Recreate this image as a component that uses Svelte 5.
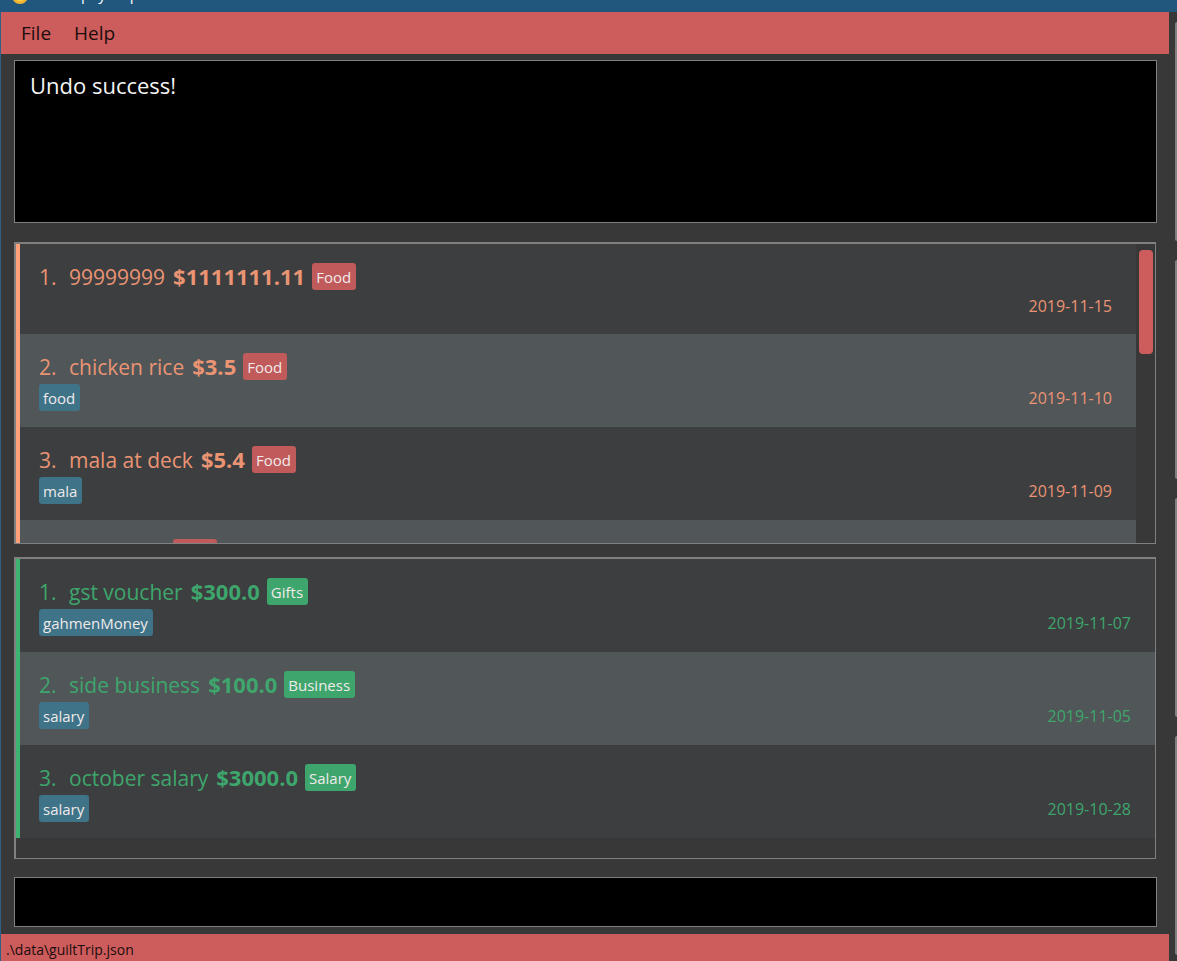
<script>
  const expenses = [
    { name: '99999999', amount: '$1111111.11', category: 'Food', tag: '', date: '2019-11-15' },
    { name: 'chicken rice', amount: '$3.5', category: 'Food', tag: 'food', date: '2019-11-10' },
    { name: 'mala at deck', amount: '$5.4', category: 'Food', tag: 'mala', date: '2019-11-09' },
    { name: 'food', amount: '$3.5', category: 'Food', tag: '', date: '' }
  ];
  const incomes = [
    { name: 'gst voucher', amount: '$300.0', category: 'Gifts', tag: 'gahmenMoney', date: '2019-11-07' },
    { name: 'side business', amount: '$100.0', category: 'Business', tag: 'salary', date: '2019-11-05' },
    { name: 'october salary', amount: '$3000.0', category: 'Salary', tag: 'salary', date: '2019-10-28' }
  ];
</script>

{#snippet entry(item, index)}
  <li class="entry" class:untagged={!item.tag}>
    <div class="headline">
      <span class="index">{index + 1}.</span>
      <span class="name">{item.name}</span>
      <strong>{item.amount}</strong>
      <span class="chip category">{item.category}</span>
    </div>
    <div class="details">
      {#if item.tag}<span class="chip tag">{item.tag}</span>{/if}
      <time>{item.date}</time>
    </div>
  </li>
{/snippet}

<div class="window">
  <header class="titlebar">
    <svg width="16" height="16" viewBox="0 0 16 16" aria-hidden="true">
      <circle cx="8" cy="8" r="8" fill="#f2b632" />
      <circle cx="8" cy="7" r="6" fill="#fbd75b" />
    </svg>
    <div class="title"><span>p</span><span>y</span><span>p</span></div>
  </header>
  <div class="body">
    <div class="main">
      <nav class="menubar">
        <button type="button">File</button>
        <button type="button">Help</button>
      </nav>
      <main class="content">
        <output class="result">Undo success!</output>
        <section class="list expenses" aria-label="Expenses">
          <ul>
            {#each expenses as item, i}{@render entry(item, i)}{/each}
          </ul>
          <div class="scrollbar"><div class="thumb"></div></div>
        </section>
        <section class="list incomes" aria-label="Incomes">
          <ul>
            {#each incomes as item, i}{@render entry(item, i)}{/each}
          </ul>
        </section>
        <input class="command" type="text" aria-label="Command" />
      </main>
      <footer class="status">.\data\guiltTrip.json</footer>
    </div>
    <aside class="side">
      {#each [0, 1, 2, 3] as panel (panel)}<div class="panel"></div>{/each}
    </aside>
  </div>
</div>

<style>
  :global(body) {
    margin: 0;
    background: #383838;
  }
  .window {
    box-sizing: border-box;
    height: 100vh;
    display: flex;
    flex-direction: column;
    overflow: hidden;
    background: #383838;
    font-family: 'Open Sans', 'Noto Sans', sans-serif;
  }
  .titlebar {
    flex: none;
    height: 12px;
    padding-left: 12px;
    display: flex;
    align-items: flex-end;
    overflow: hidden;
    background: #22577d;
    color: #fff;
    font-size: 15px;
    line-height: 20px;
  }
  .titlebar svg { margin-bottom: 8px; }
  .title {
    display: flex;
    margin: 0 0 8px 53px;
  }
  .title span:nth-child(2) { margin-left: 8px; }
  .title span:nth-child(3) { margin-left: 24px; }
  .body {
    flex: 1;
    min-height: 0;
    display: flex;
    border-left: 1px solid #2c6088;
  }
  .main {
    flex: 1;
    min-width: 0;
    display: flex;
    flex-direction: column;
  }
  .menubar {
    flex: none;
    height: 42px;
    display: flex;
    padding-left: 9px;
    background: #cd5c5c;
  }
  .menubar button {
    padding: 0 12px 0 11px;
    border: 0;
    background: none;
    color: #1c0d0d;
    font: 19px 'Open Sans', 'Noto Sans', sans-serif;
  }
  .content {
    flex: 1;
    min-height: 0;
    display: flex;
    flex-direction: column;
    padding: 6px 12px 7px 13px;
  }
  .result {
    flex: none;
    box-sizing: border-box;
    height: 163px;
    margin-bottom: 19px;
    padding: 8px 15px;
    border: 1px solid #808080;
    background: #000;
    color: #f4f4f4;
    font-size: 22px;
    line-height: 32px;
  }
  .list {
    flex: 1 1 0;
    min-height: 0;
    box-sizing: border-box;
    display: flex;
    overflow: hidden;
    margin-right: 1px;
    border: solid #808080;
    border-width: 2px 1px 1px 2px;
  }
  .expenses { --accent: #ffa07a; --text: #ea9474; --category: #c05a5b; margin-bottom: 13px; }
  .incomes { --accent: #3cb371; --text: #3ea66d; --category: #3ea66d; margin-bottom: 18px; }
  ul {
    flex: 1;
    min-width: 0;
    margin: 0;
    padding: 0;
    list-style: none;
  }
  .entry {
    box-sizing: border-box;
    height: 93px;
    padding: 17px 24px 0 19px;
    border-left: 4px solid var(--accent);
    background: #3c3e3f;
    color: var(--text);
  }
  .entry.untagged { height: 90px; }
  .entry:nth-child(even) { background: #515658; }
  .headline {
    display: flex;
    align-items: baseline;
    height: 31px;
    font-size: 21px;
    line-height: 30px;
    white-space: nowrap;
  }
  .index { width: 30px; }
  .name { margin-right: 8px; }
  strong {
    margin-right: 7px;
    font-size: 22px;
  }
  .chip {
    box-sizing: border-box;
    height: 27px;
    padding: 0 5px 0 4px;
    border-radius: 3px;
    color: #f0eaea;
    font-size: 15px;
    line-height: 28px;
  }
  .category {
    align-self: flex-start;
    margin-top: 2px;
    background: var(--category);
  }
  .tag { background: #3e7388; }
  .details {
    display: flex;
    align-items: center;
    height: 31px;
  }
  .untagged .details { height: 27px; }
  time {
    margin-left: auto;
    font-size: 16px;
  }
  .scrollbar {
    flex: none;
    width: 14px;
    padding: 6px 2px 0 3px;
  }
  .thumb {
    height: 104px;
    border-radius: 4px;
    background: #cd5c5c;
  }
  .command {
    flex: none;
    box-sizing: border-box;
    width: 100%;
    height: 50px;
    padding: 0 15px;
    border: 1px solid #808080;
    border-radius: 0;
    background: #000;
    color: #f4f4f4;
    font: 22px 'Open Sans', 'Noto Sans', sans-serif;
    outline: none;
  }
  .status {
    flex: none;
    height: 27px;
    padding-left: 5px;
    background: #cd5c5c;
    color: #1c0d0d;
    font-size: 14px;
    line-height: 32px;
  }
  .side {
    flex: none;
    width: 8px;
    box-sizing: border-box;
    display: flex;
    flex-direction: column;
    gap: 19px;
    padding: 10px 0 6px 6px;
  }
  .panel {
    flex: 1;
    border-left: 2px solid #808080;
    border-radius: 10px 0 0 10px;
  }
</style>
